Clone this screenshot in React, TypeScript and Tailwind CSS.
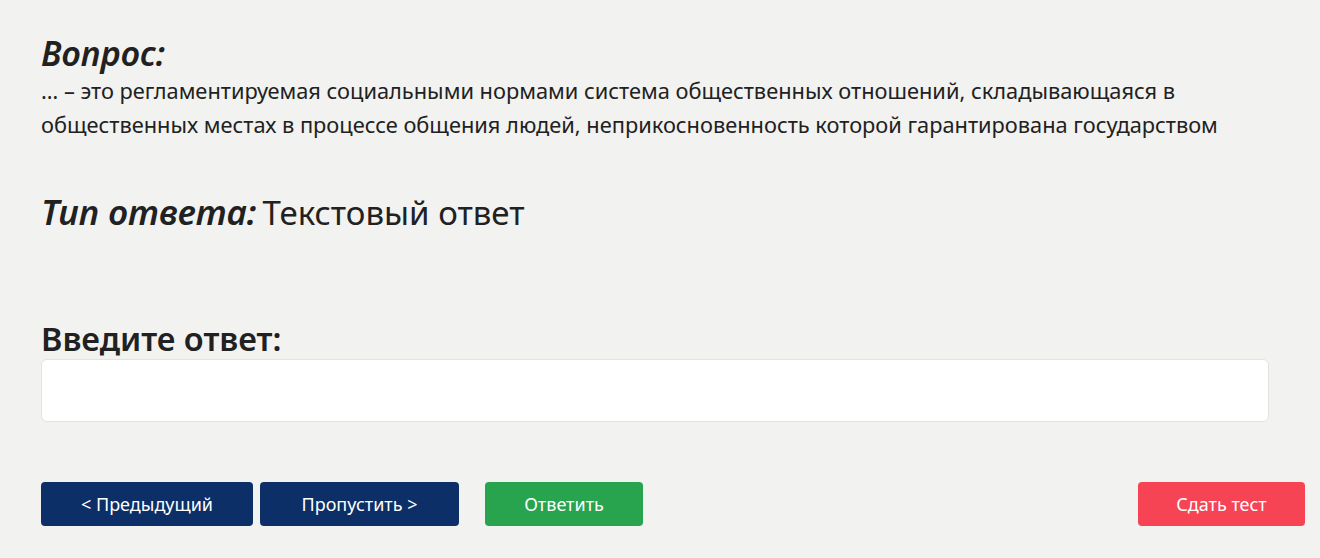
export default function App() {
  const font = { fontFamily: '"Noto Sans", "Open Sans", sans-serif' };
  return (
    <div className="w-[1320px] h-[558px] bg-[#f2f2f0] text-[#212121] overflow-hidden" style={font}>
      <div className="pl-[41px] pt-[33px]">
        <h2 className="text-[34px] leading-[40px] font-semibold italic">Вопрос:</h2>
        <p className="text-[21.8px] leading-[34px] w-[1200px] mt-[1px]">
          … – это регламентируемая социальными нормами система общественных отношений, складывающаяся в общественных местах в процессе общения людей, неприкосновенность которой гарантирована государством
        </p>
        <div className="mt-[48px] flex items-baseline gap-[6px] leading-[44px]">
          <span className="text-[35px] font-semibold italic">Тип ответа:</span>
          <span className="text-[33px]">Текстовый ответ</span>
        </div>
        <h3 className="mt-[84px] text-[32.5px] leading-[40px] font-semibold">Введите ответ:</h3>
        <input className="mt-[0px] w-[1228px] h-[63px] bg-white border border-[#e3e3e3] rounded-[6px] outline-none px-3 text-[20px]" />
      </div>
      <div className="flex items-center pl-[41px] pr-[15px] mt-[60px]">
        <button className="w-[212px] h-[44px] rounded-[4px] bg-[#0b2f66] text-white text-[18px]">&lt; Предыдущий</button>
        <button className="ml-[7px] w-[199px] h-[44px] rounded-[4px] bg-[#0b2f66] text-white text-[18px]">Пропустить &gt;</button>
        <button className="ml-[26px] w-[158px] h-[44px] rounded-[4px] bg-[#28a44f] text-white text-[18px]">Ответить</button>
        <button className="ml-auto w-[167px] h-[44px] rounded-[4px] bg-[#f64455] text-white text-[18px]">Сдать тест</button>
      </div>
    </div>
  );
}
